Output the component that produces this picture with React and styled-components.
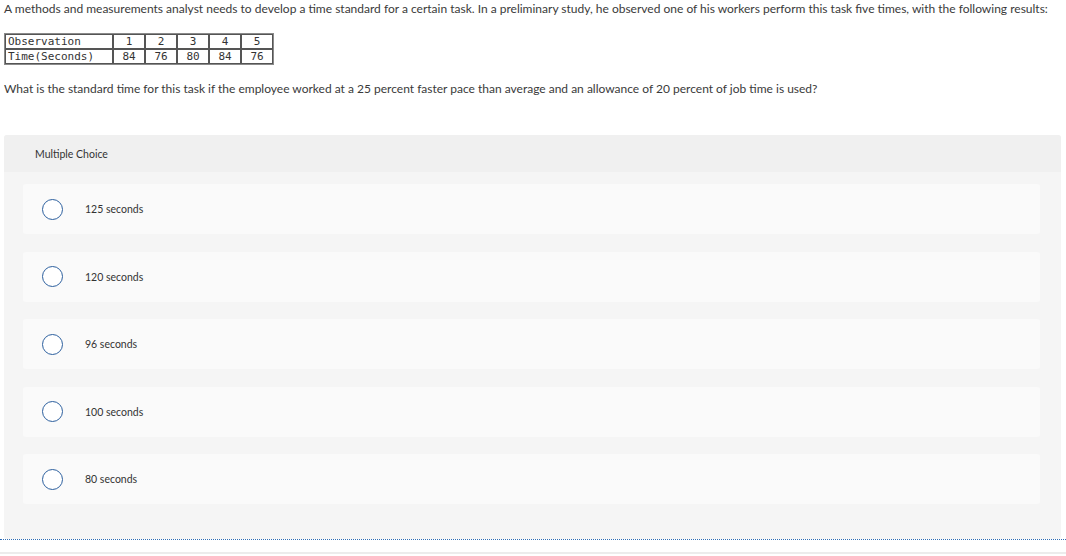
import React from "react";
import styled, { createGlobalStyle } from "styled-components";

const Global = createGlobalStyle`
  html, body { margin: 0; padding: 0; background: #fff; }
  body { font-family: Lato, "Open Sans", Arial, sans-serif; color: #333; }
`;

const Question = styled.section`
  padding: 1px 5px 0 4px;
  border-bottom: 1px dotted #2f6db5;
`;

const Para = styled.p`
  margin: ${(p) => p.$top || 0}px 0 0;
  font-size: 12px;
  line-height: 16px;
  color: #3a3a3a;
  white-space: nowrap;
`;

const DataTable = styled.table`
  margin-top: 16px;
  border-collapse: separate;
  border-spacing: 0;
  border: 1px solid #8a8a8a;
  font-family: "DejaVu Sans Mono", "Liberation Mono", monospace;
  font-size: 11px;
  color: #333;
`;

const Cell = styled.td`
  border: 1px solid #555;
  padding: 0 ${(p) => (p.$label ? "2px" : "0")};
  height: 13px;
  line-height: 13px;
  width: ${(p) => (p.$label ? "102px" : "30px")};
  text-align: ${(p) => (p.$label ? "left" : "center")};
`;

const Panel = styled.div`
  margin-top: 38px;
  background: #f5f5f5;
  border-radius: 3px;
  overflow: hidden;
`;

const PanelHeader = styled.div`
  height: 37px;
  display: flex;
  align-items: center;
  padding-left: 31px;
  background: #f0f0f0;
  font-size: 10.5px;
  color: #333;
`;

const Options = styled.div`
  display: flex;
  flex-direction: column;
  gap: 17.5px;
  padding: 12px 21px 35px 19px;
`;

const Option = styled.label`
  height: 50px;
  display: flex;
  align-items: center;
  padding-left: 19px;
  background: #fafafa;
  border-radius: 3px;
  font-size: 10.5px;
  color: #333;
  cursor: pointer;
`;

const Radio = styled.span`
  width: 21px;
  height: 21px;
  box-sizing: border-box;
  border-radius: 50%;
  border: 1.5px solid #2c5f9e;
  background: #fff;
  flex: none;
  margin-right: 22px;
`;

const Footer = styled.div`
  margin-top: 12px;
  border-top: 2px solid #ececec;
`;

const obs = ["1", "2", "3", "4", "5"];
const times = ["84", "76", "80", "84", "76"];
const choices = ["125 seconds", "120 seconds", "96 seconds", "100 seconds", "80 seconds"];

export default function App() {
  return (
    <>
      <Global />
      <Question>
        <Para>
          A methods and measurements analyst needs to develop a time standard for a certain task. In a preliminary study, he observed one of his workers perform this task five times, with the following results:
        </Para>
        <DataTable>
          <tbody>
            <tr>
              <Cell $label>Observation</Cell>
              {obs.map((o) => (
                <Cell key={o}>{o}</Cell>
              ))}
            </tr>
            <tr>
              <Cell $label>Time(Seconds)</Cell>
              {times.map((t, i) => (
                <Cell key={i}>{t}</Cell>
              ))}
            </tr>
          </tbody>
        </DataTable>
        <Para $top={16}>
          What is the standard time for this task if the employee worked at a 25 percent faster pace than average and an allowance of 20 percent of job time is used?
        </Para>
        <Panel>
          <PanelHeader>Multiple Choice</PanelHeader>
          <Options>
            {choices.map((c) => (
              <Option key={c}>
                <Radio />
                {c}
              </Option>
            ))}
          </Options>
        </Panel>
      </Question>
      <Footer />
    </>
  );
}
